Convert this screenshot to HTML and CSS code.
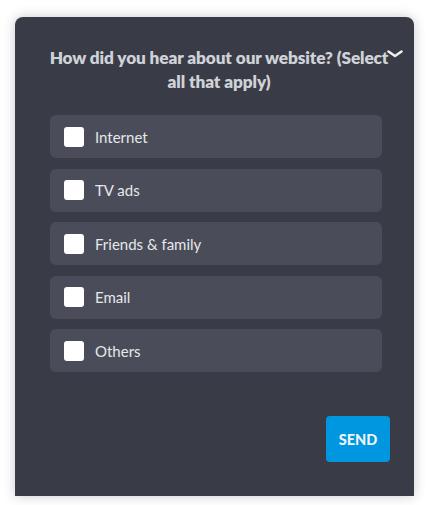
FILE: index.html
```html
<!DOCTYPE html>
<html>
<head>
<meta charset="utf-8">
<link rel="stylesheet" href="styles.css">
</head>
<body>
<div class="page">
  <div class="card">
    <svg class="chevron" width="16" height="10" viewBox="0 0 16 10"><path d="M1.5 2.5 L8 7 L14.5 2.5" fill="none" stroke="#eceef2" stroke-width="2.6" stroke-linecap="round" stroke-linejoin="round"/></svg>
    <h2 class="title">How did you hear about our website? (Select all that apply)</h2>
    <div class="options">
      <label class="option"><span class="box"></span><span class="label">Internet</span></label>
      <label class="option"><span class="box"></span><span class="label">TV ads</span></label>
      <label class="option"><span class="box"></span><span class="label">Friends &amp; family</span></label>
      <label class="option"><span class="box"></span><span class="label">Email</span></label>
      <label class="option"><span class="box"></span><span class="label">Others</span></label>
    </div>
    <div class="actions">
      <button class="send">SEND</button>
    </div>
  </div>
</div>
</body>
</html>
```
FILE: styles.css
```css
html, body {
  margin: 0;
  padding: 0;
  background: #ffffff;
  overflow: hidden;
}
.page {
  padding: 17px 15px 0 15px;
  height: 505px;
  box-sizing: border-box;
}
.card {
  position: relative;
  background: #393c46;
  border-radius: 8px 8px 0 0;
  height: 479px;
  box-shadow: 0 0 12px rgba(60, 64, 90, 0.28);
  padding: 29px 32px 0 35px;
  box-sizing: border-box;
  font-family: "Lato", "Liberation Sans", sans-serif;
}
.chevron {
  position: absolute;
  left: 372px;
  top: 32px;
}
.title {
  margin: 0 -9px 0 -3px;
  text-align: center;
  font-size: 17.2px;
  font-weight: 800;
  line-height: 24px;
  color: #cfd2d8;
  letter-spacing: -0.1px;
}
.options {
  margin-top: 21px;
  display: flex;
  flex-direction: column;
  gap: 10.5px;
}
.option {
  display: flex;
  align-items: center;
  height: 43px;
  background: #4a4d59;
  border-radius: 6px;
  padding-left: 14px;
  box-sizing: border-box;
}
.box {
  width: 20px;
  height: 20px;
  background: #ffffff;
  border-radius: 3px;
  flex: none;
}
.label {
  margin-left: 11px;
  font-size: 15px;
  color: #e6e7ea;
}
.actions {
  display: flex;
  justify-content: flex-end;
  margin-top: 44px;
  margin-right: -8px;
}
.send {
  width: 64px;
  height: 46px;
  border: none;
  border-radius: 4px;
  background: #0096e0;
  color: #eef4fa;
  font-family: "Lato", "Liberation Sans", sans-serif;
  font-weight: 900;
  font-size: 14.5px;
  padding: 0;
}
```
